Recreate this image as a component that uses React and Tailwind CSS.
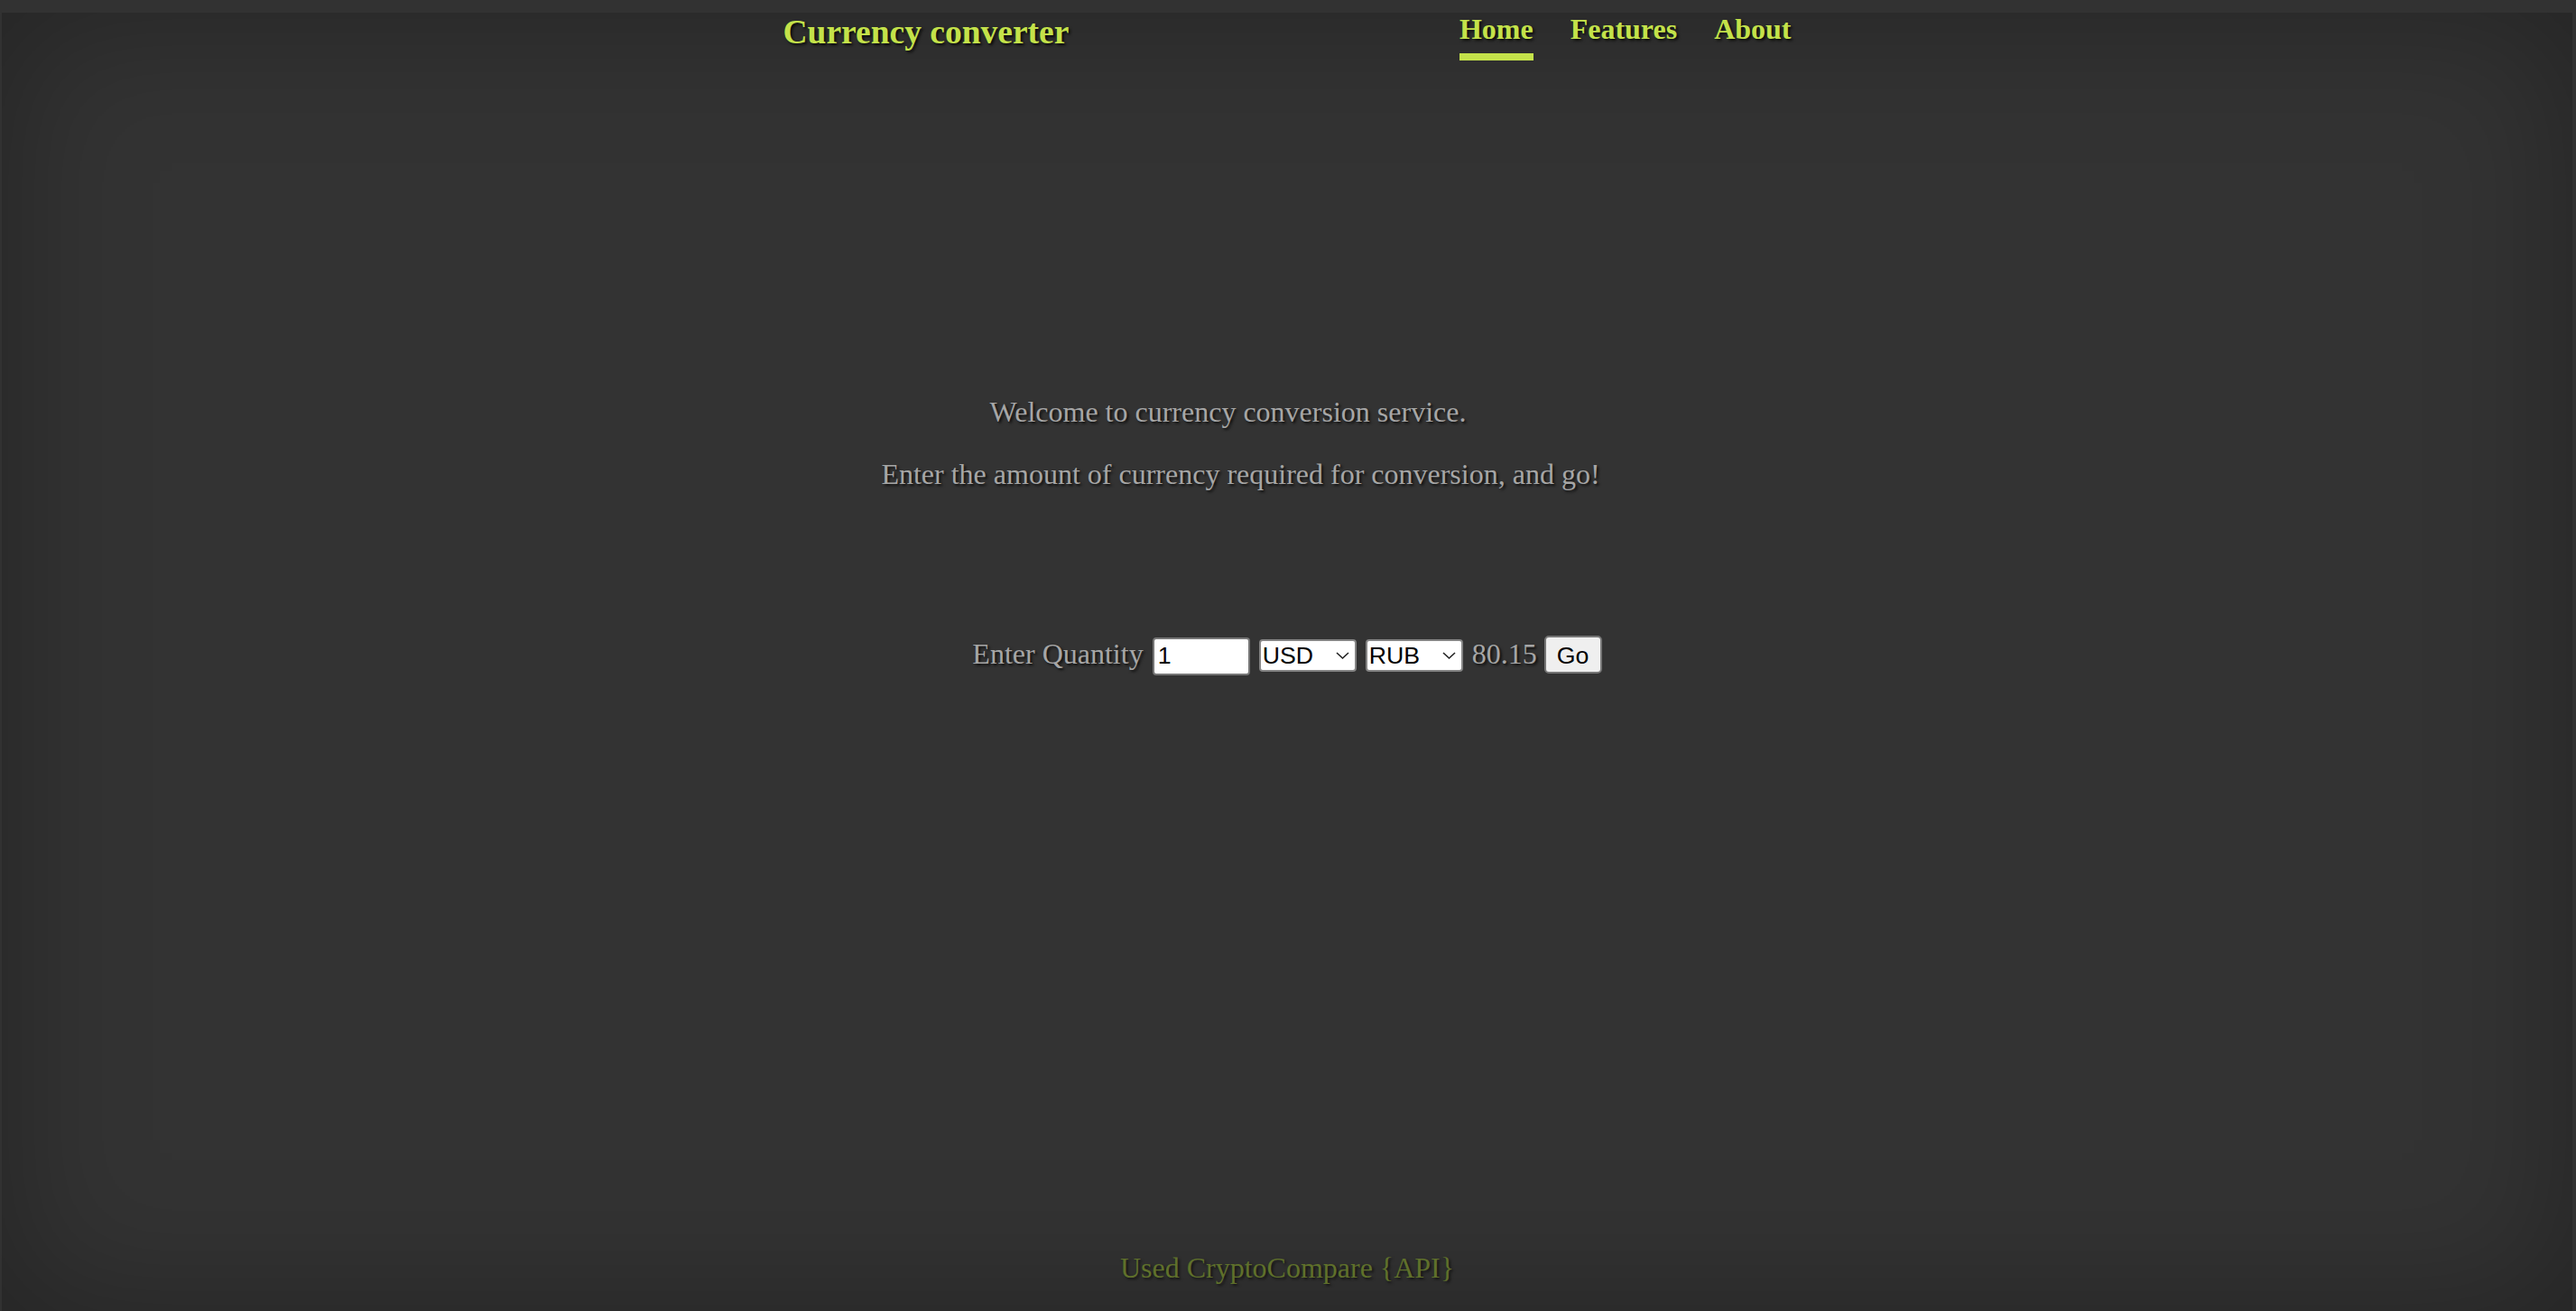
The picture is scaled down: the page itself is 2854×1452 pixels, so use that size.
import { useState } from "react";

const serif = "font-['Liberation_Serif','Times_New_Roman',serif]";
const sans = "font-['Liberation_Sans',Arial,sans-serif]";

function Chevron() {
  return (
    <svg
      width="15"
      height="9"
      viewBox="0 0 15 9"
      className="pointer-events-none absolute right-[8px] top-1/2 -translate-y-1/2"
    >
      <path d="M1 1.5 L7.5 7.5 L14 1.5" fill="none" stroke="#222" strokeWidth="1.6" />
    </svg>
  );
}

function CurrencySelect({ value, onChange, options }) {
  return (
    <span className="relative inline-flex">
      <select
        value={value}
        onChange={(e) => onChange(e.target.value)}
        className={`${sans} appearance-none w-[108px] h-[36px] pl-[2px] pr-[24px] text-[26.67px] leading-[30px] text-black bg-white border-2 border-[#858585] rounded-[4px]`}
      >
        {options.map((o) => (
          <option key={o} value={o}>
            {o}
          </option>
        ))}
      </select>
      <Chevron />
    </span>
  );
}

export default function App() {
  const [qty, setQty] = useState("1");
  const [from, setFrom] = useState("USD");
  const [to, setTo] = useState("RUB");

  const currencies = ["USD", "EUR", "RUB", "BTC", "ETH"];

  return (
    <div className="w-full h-[1452px] bg-[#323232] pt-[14px] pl-[2px] pr-[4px] flex flex-col overflow-hidden">
      <div className="flex-1 flex flex-col bg-[#333333] shadow-[inset_0_0_150px_10px_rgba(0,0,0,0.28)]">
        {/* header */}
        <header className="w-[1117px] mx-auto flex justify-between items-start">
          <div
            className={`${serif} mt-[3px] text-[37.5px] leading-none font-bold text-[#c4e24a] [text-shadow:2px_2px_3px_rgba(0,0,0,0.8)]`}
          >
            Currency converter
          </div>
          <nav className={`${serif} flex gap-[41px] mt-[2px] text-[32px] leading-none font-bold`}>
            <a href="#" className="flex flex-col">
              <span className="text-[#c4e24a] [text-shadow:2px_2px_3px_rgba(0,0,0,0.8)]">Home</span>
              <span className="mt-[11px] h-[8px] bg-[#c4e24a]" />
            </a>
            <a href="#" className="text-[#c4e24a] [text-shadow:2px_2px_3px_rgba(0,0,0,0.8)]">
              Features
            </a>
            <a href="#" className="text-[#c4e24a] [text-shadow:2px_2px_3px_rgba(0,0,0,0.8)]">
              About
            </a>
          </nav>
        </header>

        {/* intro */}
        <div
          className={`${serif} mt-[371px] text-center text-[32px] leading-[37px] text-[#a6a6a6] [text-shadow:2px_2px_3px_rgba(0,0,0,0.75)]`}
        >
          <p className="pr-[131px]">Welcome to currency conversion service.</p>
          <p className="mt-[32px] pr-[103px]">Enter the amount of currency required for conversion, and go!</p>
        </div>

        {/* converter */}
        <div className="mt-[160px] flex justify-center items-baseline gap-[10px]">
          <span
            className={`${serif} text-[32px] leading-[37px] text-[#a6a6a6] [text-shadow:2px_2px_3px_rgba(0,0,0,0.75)]`}
          >
            Enter Quantity
          </span>
          <input
            type="text"
            value={qty}
            onChange={(e) => setQty(e.target.value)}
            className={`${sans} w-[108px] h-[42px] px-[4px] text-[26.67px] text-black bg-white border-2 border-[#767676] rounded-[4px] outline-none`}
          />
          <CurrencySelect value={from} onChange={setFrom} options={currencies} />
          <CurrencySelect value={to} onChange={setTo} options={currencies} />
          <span
            className={`${serif} text-[32px] leading-[37px] text-[#a6a6a6] [text-shadow:2px_2px_3px_rgba(0,0,0,0.75)]`}
          >
            80.15
          </span>
          <button
            className={`${sans} w-[64px] h-[42px] -ml-[2px] text-[26.67px] text-black bg-[#efefef] border-2 border-[#767676] rounded-[5px]`}
          >
            Go
          </button>
        </div>

        {/* footer */}
        <footer
          className={`${serif} mt-auto pb-[29px] text-center text-[32px] leading-[37px] text-[#5f702b] [text-shadow:2px_2px_3px_rgba(0,0,0,0.6)]`}
        >
          Used CryptoCompare {"{API}"}
        </footer>
      </div>
    </div>
  );
}
